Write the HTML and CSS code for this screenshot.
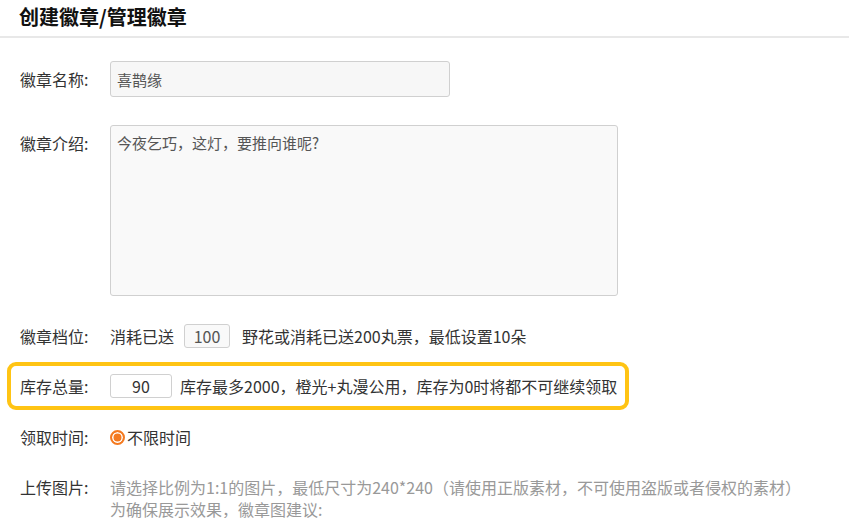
FILE: index.html
```html
<!DOCTYPE html>
<html lang="zh-CN">
<head>
    <meta charset="UTF-8">
    <meta name="viewport" content="width=device-width, initial-scale=1.0">
    <title>创建徽章/管理徽章</title>
    <link rel="stylesheet" href="styles.css">
</head>
<body>
    <div class="page-head">
        <h2 class="page-title">创建徽章/管理徽章</h2>
    </div>

    <div class="badge-form">
        <div class="form-row row-name">
            <label class="form-label">徽章名称:</label>
            <input type="text" class="text-input name-input" value="喜鹊缘">
        </div>

        <div class="form-row row-desc">
            <label class="form-label">徽章介绍:</label>
            <textarea class="text-area">今夜乞巧，这灯，要推向谁呢?</textarea>
        </div>

        <div class="form-row row-level">
            <label class="form-label">徽章档位:</label>
            <span>消耗已送</span>
            <input type="text" class="small-input level-input" value="100">
            <span>野花或消耗已送200丸票，最低设置10朵</span>
        </div>

        <div class="stock-box">
            <div class="form-row row-stock">
                <label class="form-label">库存总量:</label>
                <input type="text" class="small-input stock-input" value="90">
                <span>库存最多2000，橙光+丸漫公用，库存为0时将都不可继续领取</span>
            </div>
        </div>

        <div class="form-row row-time">
            <label class="form-label">领取时间:</label>
            <span class="radio checked"></span>
            <span>不限时间</span>
        </div>

        <div class="form-row row-upload">
            <label class="form-label">上传图片:</label>
            <div class="tip">
                请选择比例为1:1的图片，最低尺寸为240*240（请使用正版素材，不可使用盗版或者侵权的素材）<br>
                为确保展示效果，徽章图建议:
            </div>
        </div>
    </div>
</body>
</html>
```

FILE: styles.css
```css
* {
    box-sizing: border-box;
}

body {
    margin: 0;
    font-family: "Noto Sans CJK SC", "Noto Sans", sans-serif;
    font-size: 16px;
    color: #333;
    background-color: #fff;
    overflow: hidden;
}

.page-head {
    height: 38px;
    border-bottom: 2px solid #e8e8e8;
    padding-left: 19px;
}

.page-title {
    margin: 0;
    font-size: 20px;
    font-weight: bold;
    line-height: 34px;
    color: #111;
}

.badge-form {
    padding-top: 23px;
}

.form-row {
    display: flex;
    align-items: center;
    padding-left: 20px;
    line-height: 22px;
}

.form-label {
    width: 90px;
    flex-shrink: 0;
    color: #333;
}

.text-input,
.text-area,
.small-input {
    font-family: inherit;
    border: 1px solid #d0d0d0;
    border-radius: 3px;
    outline: none;
}

.name-input {
    width: 340px;
    height: 36px;
    padding: 0 6px;
    font-size: 15px;
    color: #555;
    background-color: #f7f7f7;
}

.row-desc {
    align-items: flex-start;
    margin-top: 28px;
}

.row-desc .form-label {
    padding-top: 7px;
}

.text-area {
    width: 508px;
    height: 171px;
    padding: 6px 6px;
    font-size: 15px;
    line-height: 22px;
    color: #555;
    background-color: #f9f9f9;
    resize: none;
}

.row-level {
    margin-top: 28px;
    height: 24px;
}

.small-input {
    height: 24px;
    font-size: 16px;
    text-align: center;
    color: #333;
}

.level-input {
    width: 46px;
    margin: 0 12px 0 10px;
    color: #555;
    background-color: #f9f9f9;
}

.stock-box {
    margin: 14px 0 0 7px;
    width: 622px;
    height: 48px;
    border: 4px solid #ffc414;
    border-radius: 9px;
    display: flex;
    align-items: center;
}

.stock-box .form-row {
    padding-left: 9px;
}

.stock-input {
    width: 62px;
    margin-right: 8px;
    background-color: #fff;
}

.row-time {
    margin-top: 16px;
}

.radio {
    width: 15px;
    height: 15px;
    border-radius: 50%;
    border: 2px solid #f47a20;
    margin-right: 2px;
}

.radio.checked {
    background-color: #f47a20;
    box-shadow: inset 0 0 0 1.5px #fff;
}

.row-upload {
    align-items: flex-start;
    margin-top: 28px;
}

.tip {
    color: #999;
    line-height: 22px;
}
```
